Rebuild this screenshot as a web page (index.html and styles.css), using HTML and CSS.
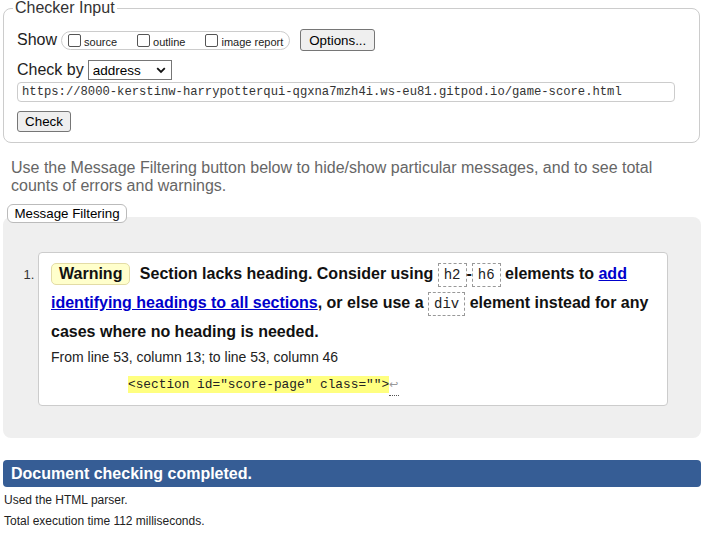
FILE: index.html
```html
<!DOCTYPE html>
<html lang="en">
<head>
<meta charset="utf-8">
<title>Nu Html Checker</title>
<link rel="stylesheet" href="styles.css">
</head>
<body>
<form class="checker">
  <fieldset class="input-set">
    <legend class="legend">Checker Input</legend>
    <div class="row row-show">
      <span class="row-label">Show</span>
      <span class="opts">
        <label class="opt"><input type="checkbox" class="cb"><span class="opt-text">source</span></label>
        <label class="opt"><input type="checkbox" class="cb"><span class="opt-text">outline</span></label>
        <label class="opt"><input type="checkbox" class="cb"><span class="opt-text">image report</span></label>
      </span>
      <button type="button" class="btn btn-options">Options...</button>
    </div>
    <div class="row row-by">
      <label class="row-label" for="docselect">Check by</label>
      <span class="select-wrap">
        <select id="docselect" class="select"><option>address</option></select>
        <svg class="chev" width="10" height="7" viewBox="0 0 10 7"><polyline points="1.2,1.2 5,5 8.8,1.2" fill="none" stroke="#111" stroke-width="1.8"/></svg>
      </span>
    </div>
    <div class="row row-url">
      <input class="url" type="url" value="https://8000-kerstinw-harrypotterqui-qgxna7mzh4i.ws-eu81.gitpod.io/game-score.html">
    </div>
    <div class="row row-check">
      <button type="button" class="btn btn-check">Check</button>
    </div>
  </fieldset>
</form>
<p class="hint">Use the Message Filtering button below to hide/show particular messages, and to see total counts of errors and warnings.</p>
<button type="button" class="btn-filter">Message Filtering</button>
<div class="results">
  <ol class="msgs">
    <li class="msg">
      <p class="msg-text"><strong class="badge">Warning</strong> Section lacks heading. Consider using <code class="kw">h2</code>-<code class="kw">h6</code> elements to <a class="link" href="#">add identifying headings to all sections</a>, or else use a <code class="kw">div</code> element instead for any cases where no heading is needed.</p>
      <p class="loc">From line 53, column 13; to line 53, column 46</p>
      <p class="extract"><code class="ext-code"><b class="hl">&lt;section id="score-page" class=""&gt;</b><span class="lf">↩</span></code></p>
    </li>
  </ol>
</div>
<h2 class="done">Document checking completed.</h2>
<p class="note">Used the HTML parser.</p>
<p class="note note-last">Total execution time 112 milliseconds.</p>
</body>
</html>
```
FILE: styles.css
```css
html, body {
  margin: 0;
  padding: 0;
}
body {
  font-family: "Liberation Sans", Arial, sans-serif;
  color: #222;
  background: #fff;
  width: 698px;
  padding-left: 3px;
}
.checker {
  margin: 0;
}
.input-set {
  margin: 0;
  box-sizing: border-box;
  width: 697px;
  padding: 13px 12px 10px 13px;
  border: 1px solid #ccc;
  border-radius: 8px;
}
.legend {
  font-size: 16px;
  line-height: 16px;
  padding: 0 2px;
  margin-left: -4px;
  color: #333;
}
.row {
  display: flex;
  align-items: center;
}
.row-show {
  height: 22px;
}
.row-label {
  font-size: 16px;
  color: #222;
  margin-right: 4px;
}
.opts {
  display: flex;
  align-items: center;
  box-sizing: border-box;
  height: 19px;
  border: 1px solid #ccc;
  border-radius: 10px;
  padding: 0 6px 0 6px;
  margin-right: 10px;
}
.opt {
  display: inline-flex;
  align-items: flex-end;
  font-size: 11px;
  color: #222;
  margin-right: 20px;
}
.opt:last-child {
  margin-right: 0;
}
.cb {
  appearance: none;
  -webkit-appearance: none;
  width: 13px;
  height: 13px;
  margin: 0 3px 0 0;
  border: 1px solid #555;
  border-radius: 2px;
  background: #fff;
  box-sizing: border-box;
}
.opt-text {
  line-height: 11px;
  margin-bottom: -1px;
}
.btn {
  font-family: "Liberation Sans", Arial, sans-serif;
  font-size: 13.33px;
  color: #000;
  background: #efefef;
  border: 1px solid #767676;
  border-radius: 3px;
  padding: 0;
  box-sizing: border-box;
}
.btn-options {
  width: 75px;
  height: 22px;
}
.row-by {
  margin-top: 9px;
  height: 20px;
}
.select-wrap {
  position: relative;
  display: inline-block;
  height: 20px;
}
.select {
  appearance: none;
  -webkit-appearance: none;
  box-sizing: border-box;
  width: 84px;
  height: 20px;
  border: 1px solid #767676;
  border-radius: 0;
  background: #fff;
  color: #000;
  font-family: "Liberation Sans", Arial, sans-serif;
  font-size: 13.5px;
  padding: 0 0 0 4px;
  margin: 0;
}
.chev {
  position: absolute;
  right: 6px;
  top: 7px;
  pointer-events: none;
}
.row-url {
  margin-top: 2px;
}
.url {
  box-sizing: border-box;
  width: 658px;
  height: 20px;
  border: 1px solid #ccc;
  border-radius: 4px;
  padding: 0 4px;
  margin: 0;
  font-family: "Liberation Mono", "Courier New", monospace;
  font-size: 12.2px;
  color: #333;
}
.row-check {
  margin-top: 9px;
}
.btn-check {
  width: 54px;
  height: 21px;
}
.hint {
  margin: 16px 0 0;
  padding-left: 8px;
  font-size: 16px;
  line-height: 18px;
  color: #666;
}
.btn-filter {
  display: block;
  position: relative;
  z-index: 1;
  margin: 9px 0 0 4px;
  width: 120px;
  height: 19px;
  box-sizing: border-box;
  padding: 0;
  font-family: "Liberation Sans", Arial, sans-serif;
  font-size: 13.33px;
  color: #000;
  background: #fff;
  border: 1px solid #bbb;
  border-radius: 6px;
}
.results {
  margin-top: -6px;
  background: #efefef;
  border-radius: 8px;
  padding: 35px 33px 32px 35px;
}
.msgs {
  margin: 0;
  padding: 0;
  list-style: decimal outside;
}
.msg {
  background: #fff;
  border: 1px solid #ccc;
  border-radius: 4px;
  padding: 6px 12px 10px 12px;
  font-size: 13px;
  color: #333;
}
.msg-text {
  margin: 0;
  font-size: 16px;
  font-weight: bold;
  line-height: 29px;
  color: #111;
}
.badge {
  display: inline-block;
  padding: 0 7px;
  line-height: 20px;
  border: 1px solid #e3dca6;
  border-radius: 5px;
  background: #ffffcc;
  margin-right: 5px;
}
.kw {
  display: inline-block;
  font-family: "Liberation Mono", "Courier New", monospace;
  font-size: 14px;
  font-weight: normal;
  line-height: 22px;
  padding: 0 5px;
  border: 1px dashed #999;
  background: #fff;
  color: #222;
}
.link {
  color: #0000cc;
  text-decoration: underline;
}
.loc {
  margin: 1px 0 0;
  font-size: 14px;
  line-height: 20px;
  color: #222;
}
.extract {
  margin: 7px 0 0;
  padding-left: 77px;
  line-height: 20px;
}
.ext-code {
  font-family: "Liberation Mono", "Courier New", monospace;
  font-size: 12.8px;
  color: #222;
}
.hl {
  font-weight: normal;
  background: #ffff80;
  padding: 1px 0;
}
.lf {
  font-family: "DejaVu Sans", sans-serif;
  font-size: 11px;
  color: #999;
  border-bottom: 1px dotted #555;
  padding: 0 1px 4px 0;
}
.done {
  margin: 22px 0 0;
  height: 27px;
  line-height: 27px;
  padding-left: 8px;
  font-size: 16px;
  font-weight: bold;
  color: #fff;
  background: #365d95;
  border-radius: 4px;
}
.note {
  margin: 0;
  padding-left: 1px;
  font-size: 12px;
  line-height: 21px;
  color: #222;
}
.done + .note {
  margin-top: 3px;
}
.note-last {
  padding-bottom: 5px;
  border-bottom: 1px dotted #888;
}
```
